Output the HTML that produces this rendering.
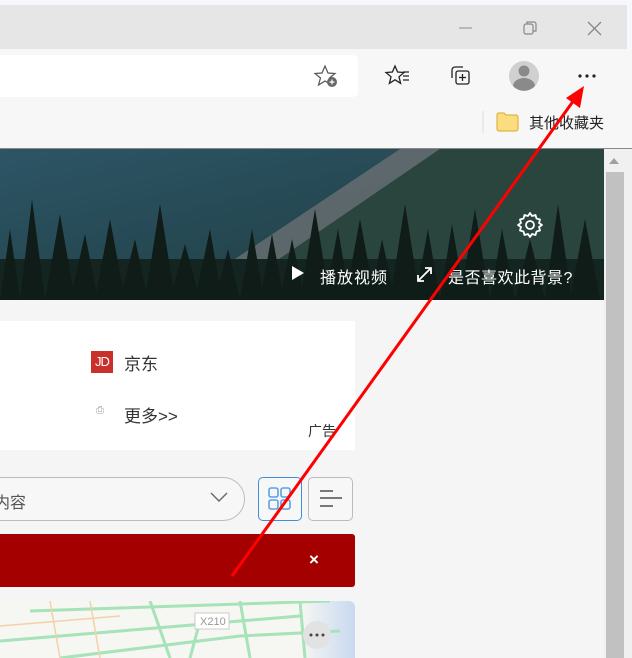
<!DOCTYPE html>
<html><head><meta charset="utf-8"><style>
*{margin:0;padding:0;box-sizing:border-box}
body{width:632px;height:658px;overflow:hidden;position:relative;background:#f5f5f5;font-family:"Liberation Sans","Noto Sans CJK SC",sans-serif}
.a{position:absolute}
</style></head><body>
<div class="a" style="left:0;top:0;width:632px;height:5px;background:#f7f8fc"></div>
<div class="a" style="left:0;top:5px;width:627px;height:44px;background:#e6e6e6"></div>
<div class="a" style="left:627px;top:5px;width:5px;height:44px;background:#f7f8fc"></div>
<div class="a" style="left:0;top:49px;width:632px;height:100px;background:#f7f7f7"></div>
<div class="a" style="left:0;top:148px;width:632px;height:1px;background:#888"></div>
<svg class="a" style="left:0;top:0" width="632" height="149">
<line x1="459" y1="28" x2="472" y2="28" stroke="#999" stroke-width="1.2"/>
<rect x="524" y="24" width="9" height="10" rx="2" fill="none" stroke="#888" stroke-width="1.2"/>
<path d="M527 24 v-2 h7 a2 2 0 0 1 2 2 v7 h-3" fill="none" stroke="#888" stroke-width="1.2"/>
<path d="M588 22 L601 35 M601 22 L588 35" stroke="#888" stroke-width="1.3"/>
<rect x="-10" y="55" width="368" height="42" rx="5" fill="#fff"/>
<path d="M325 66 l3 7 7 0.5 -5.5 4.5 2 7 -6.5 -4 -6.5 4 2 -7 -5.5 -4.5 7 -0.5z" fill="none" stroke="#555" stroke-width="1.2"/>
<circle cx="332" cy="82" r="5" fill="#666"/><path d="M332 79.5v5M329.5 82h5" stroke="#fff" stroke-width="1.2"/>
<path d="M395 66 l2.6 6 6.4 0.5 -5 4.3 1.6 6.5 -5.6 -3.5 -5.6 3.5 1.6 -6.5 -5 -4.3 6.4 -0.5z" fill="none" stroke="#222" stroke-width="1.3"/>
<path d="M403 72h6M403 76h6M403 80h6" stroke="#222" stroke-width="1.2"/>
<path d="M452 78 v-8 a3 3 0 0 1 3 -3 h8" fill="none" stroke="#222" stroke-width="1.3"/>
<rect x="456" y="71" width="13" height="13" rx="2" fill="#f7f7f7" stroke="#222" stroke-width="1.3"/>
<path d="M462.5 74v7M459 77.5h7" stroke="#222" stroke-width="1.3"/>
<circle cx="524" cy="76" r="15" fill="#d0d0d0"/>
<circle cx="524" cy="71" r="5.5" fill="#8a8a8a"/>
<path d="M513 86 a11 8 0 0 1 22 0 a15 15 0 0 1 -22 0z" fill="#8a8a8a"/>
<circle cx="580" cy="76" r="1.6" fill="#222"/><circle cx="587" cy="76" r="1.6" fill="#222"/><circle cx="594" cy="76" r="1.6" fill="#222"/>
<line x1="483" y1="111" x2="483" y2="133" stroke="#ddd"/>
<path d="M497 115 a2 2 0 0 1 2 -2 h5 l2 2 h10 a2 2 0 0 1 2 2 v12 a2 2 0 0 1 -2 2 h-17 a2 2 0 0 1 -2 -2z" fill="#fbdc7e" stroke="#d9aa2e" stroke-width="1"/>
</svg>
<div class="a" style="left:529px;top:112px;font-size:15px;color:#222">其他收藏夹</div>
<svg class="a" style="left:0;top:149px" width="604" height="151">
<defs><linearGradient id="g" x1="0" y1="0" x2="1" y2="1"><stop offset="0" stop-color="#2d5566"/><stop offset="1" stop-color="#1d3a3c"/></linearGradient></defs>
<rect width="604" height="151" fill="url(#g)"/>
<path d="M220 120 L400 0 L440 0 L250 130z" fill="#6a6f72" opacity="0.8"/>
<path d="M250 130 L440 0 L604 0 L604 151z" fill="#2a443e"/>
<rect y="110" width="604" height="41" fill="#142420"/>
<g fill="#0f1c18">
<path d="M0 151 L10 80 L20 151z M20 151 L32 50 L45 151z M45 151 L60 65 L75 151z M70 151 L85 85 L98 151z M95 151 L110 70 L125 151z M120 151 L135 90 L148 151z M145 151 L160 55 L175 151z M170 151 L185 95 L200 151z M195 151 L210 80 L222 151z M215 151 L228 100 L240 151z M240 151 L252 80 L264 151z M260 151 L272 85 L284 151z M280 151 L292 90 L305 151z M300 151 L315 60 L330 151z M325 151 L338 80 L350 151z M345 151 L360 70 L375 151z M370 151 L382 90 L395 151z M390 151 L405 55 L420 151z M415 151 L428 80 L440 151z M440 151 L452 75 L465 151z M460 151 L475 60 L490 151z M490 151 L502 80 L515 151z M515 151 L530 90 L545 151z M545 151 L558 55 L572 151z M570 151 L585 70 L600 151z"/>
</g>
<g fill="none" stroke="#fff" stroke-width="1.8">
<circle cx="530" cy="76" r="4"/>
<path d="M530 64 l2 3 3.5 -1 1 3.5 3.5 1 -1 3.5 3 2 -3 2 1 3.5 -3.5 1 -1 3.5 -3.5 -1 -2 3 -2 -3 -3.5 1 -1 -3.5 -3.5 -1 1 -3.5 -3 -2 3 -2 -1 -3.5 3.5 -1 1 -3.5 3.5 1z" stroke-linejoin="round"/>
<path d="M418 132 L431 119 M425 119 h6 v6 M418 126 v6 h6"/>
</g>
<path d="M292 117 L304 124 L292 131z" fill="#fff"/>
</svg>
<div class="a" style="left:320px;top:264px;font-size:16px;letter-spacing:1px;color:#fff">播放视频</div>
<div class="a" style="left:448px;top:264px;font-size:16px;letter-spacing:0.5px;color:#fff">是否喜欢此背景?</div>
<div class="a" style="left:604px;top:149px;width:28px;height:509px;background:#f0f0f0"></div>
<div class="a" style="left:606px;top:172px;width:18px;height:486px;background:#c1c1c1"></div>
<svg class="a" style="left:609px;top:157px" width="10" height="8"><path d="M0 7 L5 1 L10 7z" fill="#a0a0a0"/></svg>
<div class="a" style="left:0;top:321px;width:355px;height:129px;background:#fff"></div>
<div class="a" style="left:91px;top:351px;width:22px;height:22px;background:#c9302c;color:#fff;font-size:13px;line-height:22px;text-align:center;letter-spacing:-1px">JD</div>
<div class="a" style="left:124px;top:350px;font-size:17px;color:#333">京东</div>
<div class="a" style="left:96px;top:405px;font-size:10px;color:#999">⎙</div>
<div class="a" style="left:124px;top:402px;font-size:17px;color:#333">更多&gt;&gt;</div>
<div class="a" style="left:308px;top:421px;font-size:14px;color:#333">广告</div>
<div class="a" style="left:-40px;top:477px;width:285px;height:44px;border:1px solid #bbb;border-radius:22px;background:#f7f7f7"></div>
<div class="a" style="left:-6px;top:489px;font-size:16px;color:#555">内容</div>
<svg class="a" style="left:209px;top:490px" width="20" height="14"><path d="M2 3 L10 11 L18 3" fill="none" stroke="#666" stroke-width="1.4"/></svg>
<div class="a" style="left:258px;top:477px;width:44px;height:44px;border:1.5px solid #3b8ee0;border-radius:5px;background:#f7f7f7"></div>
<svg class="a" style="left:268px;top:487px" width="24" height="24" fill="none" stroke="#5aa0e6" stroke-width="1.6"><rect x="1" y="1" width="9" height="9" rx="2"/><rect x="13" y="1" width="9" height="9" rx="2"/><rect x="1" y="13" width="9" height="9" rx="2"/><rect x="13" y="13" width="9" height="9" rx="2"/></svg>
<div class="a" style="left:308px;top:477px;width:45px;height:44px;border:1px solid #bbb;border-radius:5px;background:#f7f7f7"></div>
<svg class="a" style="left:318px;top:488px" width="26" height="22"><path d="M2 3h13M2 10h22M2 18h13" stroke="#666" stroke-width="1.8"/></svg>
<div class="a" style="left:0;top:534px;width:355px;height:53px;background:#a50000;border-radius:0 3px 3px 0"></div>
<div class="a" style="left:309px;top:550px;font-size:17px;font-weight:bold;color:#fff">×</div>
<svg class="a" style="left:0;top:601px" width="356" height="57">
<defs><linearGradient id="m" x1="0" y1="0" x2="1" y2="0"><stop offset="0.85" stop-color="#f6f6f2"/><stop offset="1" stop-color="#c8d9f0"/></linearGradient></defs>
<path d="M0 0 H349 a6 6 0 0 1 6 6 V57 H0z" fill="url(#m)"/>
<g stroke="#a6e3b8" stroke-width="3" fill="none">
<path d="M0 40 L180 25 L300 15 M60 57 L240 35 L340 30 M240 0 L250 57 M300 0 L305 57 M150 0 L170 57 M30 10 L330 0 M190 57 L200 20"/>
</g>
<g stroke="#f3d2a8" stroke-width="1.5" fill="none"><path d="M0 25 L120 15 M50 0 L60 57 M100 57 L90 0"/></g>
<rect x="195" y="12" width="34" height="16" fill="#fff" stroke="#ccc"/>
<text x="200" y="24" font-size="11" fill="#999" font-family="Liberation Sans">X210</text>
<circle cx="317" cy="34" r="14" fill="#e2e2e2"/>
<circle cx="311" cy="34" r="1.5" fill="#444"/><circle cx="317" cy="34" r="1.5" fill="#444"/><circle cx="323" cy="34" r="1.5" fill="#444"/>
</svg>
<svg class="a" style="left:0;top:0" width="632" height="658">
<line x1="232" y1="576" x2="574" y2="100" stroke="#f00" stroke-width="3"/>
<path d="M584 86 L566 98 L580 108z" fill="#f00"/>
</svg>
</body></html>
